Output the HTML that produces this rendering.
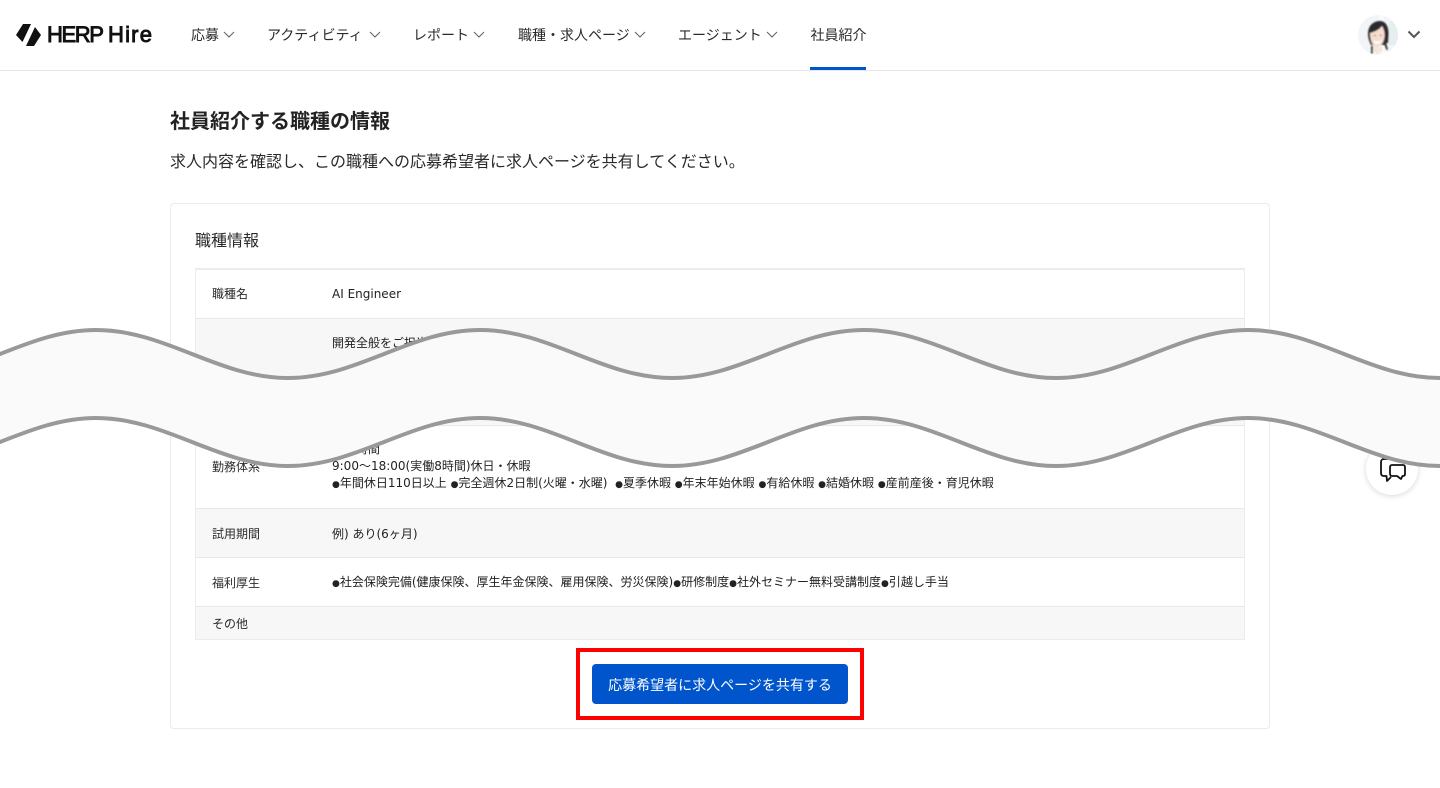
<!DOCTYPE html>
<html lang="ja"><head><meta charset="utf-8"><title>社員紹介</title>
<style>
html,body{margin:0;padding:0;background:#fff;overflow:hidden}
body{width:1440px;height:788px;overflow:hidden;position:relative;font-family:"DejaVu Sans","Noto Sans CJK JP",sans-serif;color:#222}
.t{position:absolute;white-space:nowrap;font-family:"Noto Sans CJK JP","Liberation Sans",sans-serif}
.n{font-size:14px;line-height:20px;top:25px;color:#2a2a2a}
.s{font-size:12px;line-height:17px;color:#222}
.l{left:212px;color:#2a2a2a}.v{left:332px;font-family:"DejaVu Sans","Noto Sans CJK JP",sans-serif;letter-spacing:0}
.v i{font-style:normal;font-size:9px}
.b{position:absolute;box-sizing:border-box}
.r{position:absolute;left:195px;width:1050px;box-sizing:border-box;border-bottom:1px solid #e8e8e8}
svg{position:absolute;overflow:hidden}
</style></head><body>
<div class="b" style="left:0;top:70px;width:1440px;height:1px;background:#e8e8e8"></div>
<svg style="left:0;top:0" width="60" height="70" viewBox="0 0 60 70"><path fill="#111" d="M16 35 L23 24 H31 L22.500 42 Z M35 27 L41 35 L34 46 H26 Z"/></svg>
<div class="t" style="left:47px;top:20px;font:22px/30px 'Liberation Sans',sans-serif;-webkit-text-stroke:.9px #111;color:#111;letter-spacing:-1.400px">HERP</div>
<div class="t" style="left:108px;top:20px;font:22px/30px 'Liberation Sans',sans-serif;-webkit-text-stroke:.9px #111;color:#111;letter-spacing:1.200px">Hire</div>

<div class="t n" style="left:191px">応募</div>
<div class="t n" style="left:267px">アクティビティ</div>
<div class="t n" style="left:413px">レポート</div>
<div class="t n" style="left:518px">職種・求人ページ</div>
<div class="t n" style="left:678px">エージェント</div>
<div class="t n" style="left:810.500px">社員紹介</div>
<svg style="left:0;top:0" width="800" height="70" fill="none" stroke="#666" stroke-width="1.1"><path d="M224 32l5 5 5-5M370 32l5 5 5-5M474 32l5 5 5-5M635 32l5 5 5-5M767 32l5 5 5-5"/></svg>
<div class="b" style="left:810px;top:67px;width:56px;height:3px;background:#0055cc"></div>

<svg style="left:1358px;top:15px" width="40" height="40" viewBox="0 0 40 40">
<defs><clipPath id="c"><circle cx="20" cy="20" r="20"/></clipPath><filter id="f"><feGaussianBlur stdDeviation=".8"/></filter></defs>
<g clip-path="url(#c)"><rect width="40" height="40" fill="#f2f5f7"/><rect x="21" y="0" width="5" height="40" fill="#f9fafb"/><rect x="31" y="6" width="9" height="24" fill="#e6eff0"/>
<g filter="url(#f)">
<path d="M14 40L16 32H25L30 36L32 40Z" fill="#fcfcfc"/>
<path d="M10 19C10 10 16 6 22 6C28 6 31 12 30.500 20L30 28L28 28L27 30H13C11 26 10 23 10 19Z" fill="#2b2a2e"/>
<path d="M12 18C15 17 20 16 24 11C26 14 27 18 26.500 22C26 27 23 32 19 32C15 32 12 26 12 18Z" fill="#f6dccd"/>
<path d="M15 25Q19 28 24 25Q22 29 19 29Q16 29 15 25Z" fill="#fff"/>
<path d="M15.500 20.500h2.500M21.500 20.500h2.500" stroke="#665" stroke-width=".8"/>
<path d="M16 31Q20 33 24 31L25 36L19 40L15 36Z" fill="#f8e6da"/>
<path d="M27 27L29 35" stroke="#333" stroke-width="2"/>
<path d="M14 31L14 39" stroke="#3a4a4a" stroke-width="2"/>
</g></g></svg>
<svg style="left:1400px;top:20px" width="30" height="30" fill="none" stroke="#555" stroke-width="2"><path d="M8.500 11.500l5.500 5.500 5.500-5.500"/></svg>

<div class="t" style="left:170px;top:105px;font-size:20px;line-height:30px;font-weight:700;color:#222">社員紹介する職種の情報</div>
<div class="t" style="left:170px;top:148px;font-size:16px;line-height:24px;color:#2a2a2a">求人内容を確認し、この職種への応募希望者に求人ページを共有してください。</div>

<div class="b" style="left:170px;top:203px;width:1100px;height:526px;border:1px solid #ebebeb;border-radius:4px"></div>
<div class="t" style="left:195px;top:227px;font-size:16px;line-height:24px;color:#2a2a2a">職種情報</div>

<div class="r" style="top:270px;height:49px"></div>
<div class="r" style="top:319px;height:107px;background:#f7f7f7"></div>
<div class="r" style="top:426px;height:83px"></div>
<div class="r" style="top:509px;height:49px;background:#f7f7f7"></div>
<div class="r" style="top:558px;height:49px"></div>
<div class="r" style="top:607px;height:33px;background:#f7f7f7"></div>
<div class="b" style="left:195px;top:268px;width:1050px;height:372px;border:1px solid #ececec;border-top-width:2px"></div>

<div class="t s l" style="top:285px">職種名</div>
<div class="t s v" style="top:286px">AI Engineer</div>
<div class="t s v" style="top:335px">開発全般をご担当いただきます</div>
<div class="t s v" style="top:441px">勤務時間</div>
<div class="t s l" style="top:458px">勤務体系</div>
<div class="t s v" style="top:458px">9:00～18:00(実働8時間)休日・休暇</div>
<div class="t s v" style="top:475px"><i>●</i>年間休日110日以上 <i>●</i>完全週休2日制(火曜・水曜)&nbsp; <i>●</i>夏季休暇 <i>●</i>年末年始休暇 <i>●</i>有給休暇 <i>●</i>結婚休暇 <i>●</i>産前産後・育児休暇</div>
<div class="t s l" style="top:525px">試用期間</div>
<div class="t s v" style="top:526px">例) あり(6ヶ月)</div>
<div class="t s l" style="top:574px">福利厚生</div>
<div class="t s v" style="top:574px"><i>●</i>社会保険完備(健康保険、厚生年金保険、雇用保険、労災保険)<i>●</i>研修制度<i>●</i>社外セミナー無料受講制度<i>●</i>引越し手当</div>
<div class="t s l" style="top:615px">その他</div>

<div class="b" style="left:592px;top:664px;width:256px;height:40px;background:#0055cc;border-radius:4px"></div>
<div class="t" style="left:592px;top:665px;width:256px;text-align:center;font-size:14px;line-height:40px;color:#fff">応募希望者に求人ページを共有する</div>

<div class="b" style="left:1366px;top:443px;width:52px;height:52px;border-radius:50%;background:#fff;box-shadow:0 1px 6px rgba(0,0,0,.16)"></div>
<svg style="left:1370px;top:450px" width="45" height="40" fill="none" stroke="#111" stroke-width="1.800" stroke-linejoin="round"><path d="M19 9H14C12 9 11 10.500 11 12V23C11 25 12 26 14 26H16.500L17 31 21 27"/><path d="M22 15H33C34.500 15 35 16 35 17.500V24C35 25.500 34 26 33 26H32.500L31 29 27 26H22C20.500 26 20 25 20 23.500V17.500C20 16 20.500 15 22 15Z"/></svg>

<svg style="left:0;top:0" width="1440" height="788" viewBox="0 0 1440 788">
<path fill="#fafafa" d="M-96 378C-26 378 26 330 96 330S218 378 288 378S410 330 480 330S602 378 672 378S794 330 864 330S986 378 1056 378S1178 330 1248 330S1370 378 1440 378S1562 330 1632 330L1632 418C1562 418 1510 466 1440 466S1318 418 1248 418S1126 466 1056 466S934 418 864 418S742 466 672 466S550 418 480 418S358 466 288 466S166 418 96 418S-26 466 -96 466Z"/>
<g fill="none" stroke="#999" stroke-width="4">
<path d="M-96 378C-26 378 26 330 96 330S218 378 288 378S410 330 480 330S602 378 672 378S794 330 864 330S986 378 1056 378S1178 330 1248 330S1370 378 1440 378S1562 330 1632 330"/>
<path d="M-96 466C-26 466 26 418 96 418S218 466 288 466S410 418 480 418S602 466 672 466S794 418 864 418S986 466 1056 466S1178 418 1248 418S1370 466 1440 466S1562 418 1632 418"/>
</g></svg>

<div class="b" style="left:576px;top:648px;width:288px;height:72px;border:4px solid #f00"></div>
</body></html>
